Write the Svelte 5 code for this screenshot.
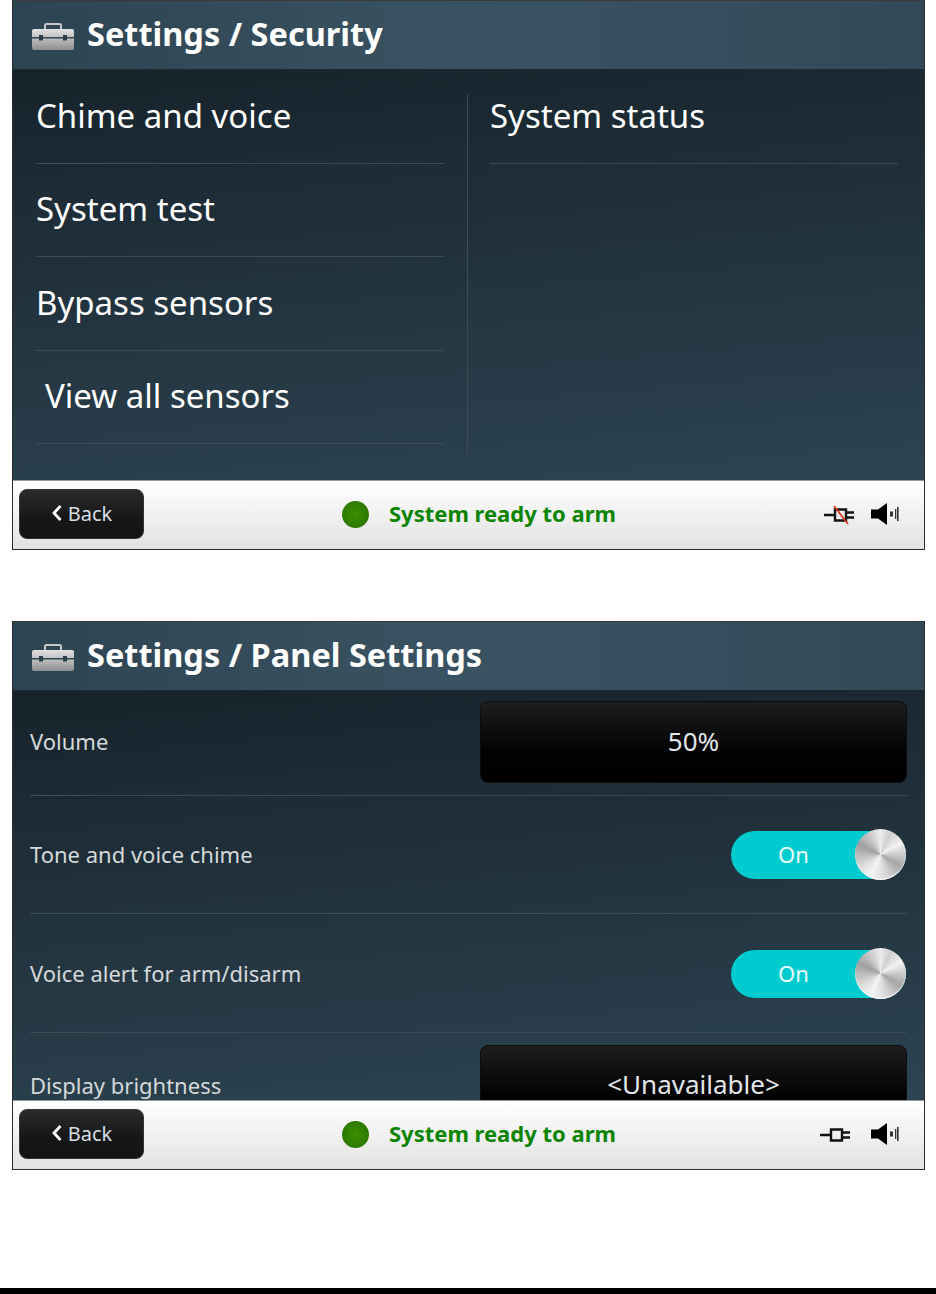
<script>
    let leftItems = ["Chime and voice", "System test", "Bypass sensors", "View all sensors"];
</script>

{#snippet plug(off)}
    <svg class="plug" width="31" height="20" viewBox="0 0 31 20">
        <path d="M0 10H11M11 4.500H22V15.500H11ZM22 7.500H30M22 12.500H30" fill="none" stroke="#111" stroke-width="2.400"/>
        {#if off}
            <path d="M10 1L24 19" stroke="#e0341c" stroke-width="1.800"/>
        {/if}
    </svg>
{/snippet}

{#snippet footer(off)}
    <div class="footer">
        <button class="back">
            <svg width="12" height="18" viewBox="0 0 12 18"><path d="M9.500 2L3 9l6.500 7" fill="none" stroke="#fff" stroke-width="2.800"/></svg>
            <span>Back</span>
        </button>
        <div class="status">
            <span class="dot"></span>
            <span class="status-text">System ready to arm</span>
        </div>
        <div class="icons" class:off>
            {@render plug(off)}
            <svg width="28" height="22" viewBox="0 0 28 22">
                <path d="M0 6.500H7L16 0V22L7 15.500H0Z" fill="#000"/>
                <path d="M19 8.500h3v5h-3zM24 6h1.300v10H24zM26 4h1.600v14H26z" fill="#333"/>
            </svg>
        </div>
    </div>
{/snippet}

{#snippet header(title)}
    <div class="header">
        <svg class="case" width="44" height="28" viewBox="0 0 44 28">
            <defs>
                <linearGradient id="case" x1="0" y1="0" x2="0" y2="1">
                    <stop offset="0" stop-color="#e2e2e2"/>
                    <stop offset="1" stop-color="#8f8f8f"/>
                </linearGradient>
            </defs>
            <path d="M14 7V2.500Q14 1 15.500 1H28.500Q30 1 30 2.500V7" fill="none" stroke="#c8c8c8" stroke-width="2"/>
            <path d="M3 6H41Q43 6 43 8V14H1V8Q1 6 3 6Z M1 15.500H43V25Q43 27 41 27H3Q1 27 1 25Z" fill="url(#case)"/>
            <rect x="8" y="12" width="4" height="5.500" fill="#2c3e4a"/>
            <rect x="32" y="12" width="4" height="5.500" fill="#2c3e4a"/>
        </svg>
        <h1>{title}</h1>
    </div>
{/snippet}

<div class="page">
    <section class="panel">
        {@render header("Settings / Security")}
        <div class="content menu">
            <div class="col">
                {#each leftItems as item, i}
                    <div class="menu-row" class:indent={i == 3}>{item}</div>
                {/each}
            </div>
            <div class="divider"></div>
            <div class="col">
                <div class="menu-row">System status</div>
            </div>
        </div>
        {@render footer(true)}
    </section>

    <section class="panel second">
        {@render header("Settings / Panel Settings")}
        <div class="content settings">
            <div class="row first">
                <span>Volume</span>
                <div class="select">50%</div>
            </div>
            <div class="row">
                <span>Tone and voice chime</span>
                <div class="toggle"><span>On</span><i class="knob"></i></div>
            </div>
            <div class="row third">
                <span>Voice alert for arm/disarm</span>
                <div class="toggle"><span>On</span><i class="knob"></i></div>
            </div>
            <div class="row last">
                <span>Display brightness</span>
                <div class="select">&lt;Unavailable&gt;</div>
            </div>
        </div>
        {@render footer(false)}
    </section>

    <div class="blackbar"></div>
</div>

<style>
    :global(body) {
        margin: 0;
        background: #fff;
    }
    .page {
        width: 936px;
        height: 1294px;
        display: flex;
        flex-direction: column;
        font-family: "Noto Sans", "Open Sans", sans-serif;
        overflow: hidden;
    }
    .panel {
        width: 911px;
        margin-left: 12px;
        height: 548px;
        border: 1px solid #2a2a2a;
        border-top-color: #3a3a3a;
        display: flex;
        flex-direction: column;
    }
    .second {
        margin-top: 71px;
        height: 547px;
    }
    .header {
        height: 69px;
        flex: none;
        box-sizing: border-box;
        display: flex;
        align-items: center;
        gap: 12px;
        padding-left: 18px;
        background: linear-gradient(90deg, #2d4452, #3a5362 50%, #324958);
        border-bottom: 1px solid #1d2a32;
    }
    .case {
        margin-top: 3px;
    }
    h1 {
        margin: 0;
        font-size: 32.500px;
        font-weight: 700;
        color: #fff;
        line-height: 1;
        padding-bottom: 1px;
    }
    .content {
        flex: 1;
        min-height: 0;
        overflow: hidden;
        background: linear-gradient(175deg, #17232b, #2d4452);
    }
    .menu {
        display: flex;
        padding-left: 23px;
    }
    .col {
        width: 408px;
    }
    .divider {
        width: 1px;
        height: 364px;
        margin: 24px 22px 0 23px;
        background: #3a4d57;
    }
    .menu-row {
        height: 93.500px;
        box-sizing: border-box;
        padding-bottom: 2px;
        border-bottom: 1px solid #3a4d57;
        display: flex;
        align-items: center;
        color: #fff;
        font-size: 33px;
    }
    .indent {
        padding-left: 9px;
    }
    .settings {
        padding: 0 17px;
    }
    .row {
        height: 118px;
        box-sizing: border-box;
        display: flex;
        align-items: center;
        justify-content: space-between;
        border-bottom: 1px solid #3a4d57;
        color: #d6d9da;
        font-size: 22px;
    }
    .row > span {
        padding-bottom: 2px;
    }
    .row.first {
        height: 105px;
        padding-bottom: 2px;
    }
    .row.third {
        height: 119px;
        padding-top: 2px;
    }
    .row.last {
        height: 110px;
        border-bottom: 0;
        align-items: flex-start;
        padding-top: 12px;
    }
    .row.last > span {
        margin-top: 25px;
    }
    .select {
        width: 427px;
        height: 82px;
        box-sizing: border-box;
        border: 1px solid #0d0d0d;
        border-radius: 8px;
        padding-bottom: 3px;
        background: linear-gradient(#1e1e1e, #020202 62%, #000);
        color: #e3e6e8;
        font-size: 26px;
        display: flex;
        align-items: center;
        justify-content: center;
    }
    .row.last .select {
        padding-bottom: 5px;
    }
    .toggle {
        width: 175px;
        height: 48px;
        margin-right: 1px;
        border-radius: 24px;
        background: #00ccd0;
        position: relative;
        display: flex;
        align-items: center;
        color: #eafcfc;
        font-size: 22px;
    }
    .toggle span {
        margin-left: 47px;
        padding-bottom: 2px;
    }
    .knob {
        position: absolute;
        right: 0;
        top: -2px;
        width: 51px;
        height: 51px;
        border-radius: 50%;
        background: conic-gradient(#ececec 0deg, #cfcfcf 25deg, #f2f2f2 60deg, #a6a6a6 120deg, #d8d8d8 165deg, #f5f5f5 205deg, #dadada 240deg, #9f9f9f 295deg, #ececec 360deg);
        box-shadow: inset 0 -1px 1px #fff;
    }
    .footer {
        flex: none;
        height: 69px;
        box-sizing: border-box;
        border-top: 1px solid #8d9aa2;
        padding: 8px 0 0 6px;
        background: linear-gradient(#fff, #e2e2e2);
        display: flex;
    }
    .back {
        width: 125px;
        height: 50px;
        border: 1px solid #333;
        border-radius: 8px;
        background: linear-gradient(#2b2b2b, #161616 60%, #141414);
        color: #d5dfe6;
        display: flex;
        align-items: center;
        justify-content: center;
        gap: 5px;
        padding: 0 0 2px 0;
        font-family: inherit;
        font-size: 20px;
    }
    .status {
        display: flex;
        align-items: center;
        height: 50px;
        margin-left: 198px;
        gap: 20px;
    }
    .dot {
        width: 27px;
        height: 27px;
        border-radius: 50%;
        background: radial-gradient(circle, #3b8f00, #267000);
    }
    .status-text {
        color: #0b8400;
        font-size: 22px;
        font-weight: 700;
        padding-bottom: 2px;
    }
    .icons {
        display: flex;
        align-items: center;
        height: 50px;
        gap: 20px;
        margin-left: auto;
        padding-right: 25px;
    }
    .icons.off {
        gap: 16px;
    }
    .plug {
        margin-top: 2px;
    }
    .blackbar {
        height: 6px;
        margin-top: auto;
        background: #000;
        flex: none;
    }
</style>
